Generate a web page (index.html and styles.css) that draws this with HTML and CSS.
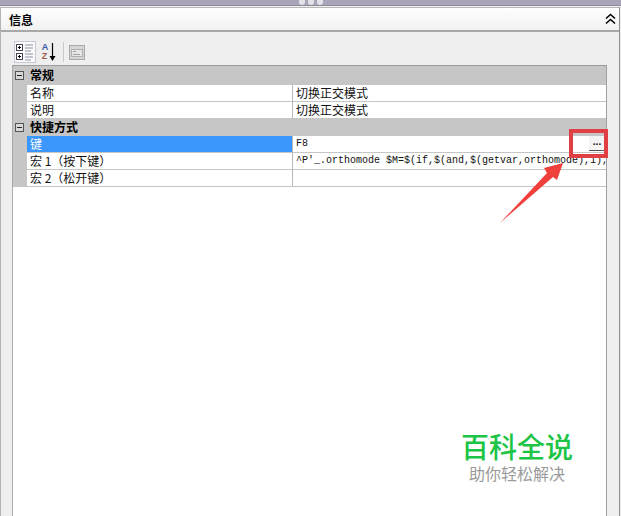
FILE: index.html
```html
<!DOCTYPE html>
<html lang="zh-CN">

<head>
   <meta charset="UTF-8">
   <title>信息</title>
   <link rel="stylesheet" href="styles.css">
</head>

<body>
   <div class="grip-bar">
      <span class="grip-dot"></span><span class="grip-dot"></span><span class="grip-dot"></span>
   </div>

   <div class="panel">
      <div class="panel-head">
         <span class="panel-title">信息</span>
         <svg class="collapse-icon" width="11" height="12" viewBox="0 0 11 12">
            <path d="M1 5.5 L5.5 1.5 L10 5.5 M1 10.5 L5.5 6.5 L10 10.5" fill="none" stroke="#000" stroke-width="1.6" />
         </svg>
      </div>

      <div class="panel-body">
         <div class="toolbar">
            <span class="tool-btn tool-active">
               <svg width="20" height="20" viewBox="0 0 20 20">
                  <rect x="1.5" y="2.5" width="6" height="6" fill="#fff" stroke="#445" />
                  <rect x="1.5" y="11.5" width="6" height="6" fill="#fff" stroke="#445" />
                  <path d="M3 5.5h3M4.500 4v3M3 14.500h3M4.500 13v3" stroke="#000" />
                  <path d="M10 3h8M10 6h8M10 9h6M10 12h8M10 15h8M10 18h6" stroke="#8a93a8" />
               </svg>
            </span>
            <span class="tool-btn tool-sort">
               <span class="sort-letters"><span class="letter-a">A</span><span class="letter-z">Z</span></span>
               <svg width="7" height="19" viewBox="0 0 7 19">
                  <path d="M3.500 0v15" stroke="#000" stroke-width="1.200" />
                  <path d="M0.500 13h6L3.500 18z" fill="#000" />
               </svg>
            </span>
            <span class="tool-sep"></span>
            <span class="tool-btn">
               <svg width="16" height="15" viewBox="0 0 16 15">
                  <rect x="0.500" y="0.500" width="15" height="14" fill="#d6d6d6" stroke="#a8a8a8" />
                  <rect x="2.500" y="4.500" width="11" height="7" fill="#e6e6e6" stroke="#b0b0b0" />
                  <path d="M4 6.500h3M4 9.500h7" stroke="#a0a0a0" />
               </svg>
            </span>
         </div>

         <div class="grid">
            <div class="cat-row">
               <span class="expander"></span>
               <span class="cat-name">常规</span>
            </div>
            <div class="row">
               <span class="cell-name">名称</span>
               <span class="cell-value">切换正交模式</span>
            </div>
            <div class="row">
               <span class="cell-name">说明</span>
               <span class="cell-value">切换正交模式</span>
            </div>
            <div class="cat-row">
               <span class="expander"></span>
               <span class="cat-name">快捷方式</span>
            </div>
            <div class="row">
               <span class="cell-name selected">键</span>
               <span class="cell-value mono">F8<span class="dots-btn">...</span></span>
            </div>
            <div class="row">
               <span class="cell-name">宏 1（按下键）</span>
               <span class="cell-value mono">^P'_.orthomode $M=$(if,$(and,$(getvar,orthomode),1),</span>
            </div>
            <div class="row">
               <span class="cell-name">宏 2（松开键）</span>
               <span class="cell-value mono"></span>
            </div>
         </div>
      </div>
   </div>

   <span class="red-box"></span>
   <svg class="red-arrow" width="70" height="66" viewBox="0 0 70 66">
      <path d="M65 3 L46 8 L49 13 L2 63 L55 17 L59 20 Z" fill="#f0403c" />
   </svg>

   <div class="watermark">
      <div class="wm-title">百科全说</div>
      <div class="wm-sub">助你轻松解决</div>
   </div>
</body>

</html>
```

FILE: styles.css
```css
html,
body {
   margin: 0;
   padding: 0;
}

body {
   position: relative;
   width: 621px;
   height: 516px;
   overflow: hidden;
   background: #efefef;
   font-family: "Noto Sans CJK SC", "Liberation Sans", sans-serif;
   color: #111;
}

.grip-bar {
   height: 5px;
   background: #a9a4b7;
   border-bottom: 1px solid #8f8b99;
   display: flex;
   justify-content: center;
   gap: 3px;
}

.grip-dot {
   width: 6px;
   height: 5px;
   border-radius: 0 0 3px 3px;
   background: #e4e2ea;
}

.panel {
   margin-right: 1px;
   border-left: 1px solid #b4b4b4;
   border-right: 1px solid #8e8e8e;
   height: 510px;
}

.panel-head {
   height: 22px;
   margin-top: 1px;
   display: flex;
   align-items: center;
   justify-content: space-between;
   padding: 0 3px 0 8px;
   background: linear-gradient(to bottom, #ffffff, #f1f1f1);
   border-top: 1px solid #b8b8b8;
   border-bottom: 2px solid #a8a8a8;
}

.panel-title {
   font-size: 12px;
   font-weight: bold;
   color: #000;
}

.collapse-icon {
   display: block;
}

.panel-body {
   height: 484px;
   display: flex;
   flex-direction: column;
   padding-left: 11px;
   padding-right: 12px;
}

.toolbar {
   height: 33px;
   flex: none;
   display: flex;
   align-items: center;
   gap: 2px;
   padding-top: 7px;
   box-sizing: border-box;
   padding-left: 2px;
}

.tool-btn {
   width: 22px;
   height: 22px;
   display: flex;
   align-items: center;
   justify-content: center;
}

.tool-active {
   background: #fafafa;
   border: 1px solid #c4c8d2;
   box-sizing: border-box;
}

.tool-sort {
   gap: 1px;
}

.sort-letters {
   display: flex;
   flex-direction: column;
   font: bold 9px/9px "Liberation Sans", sans-serif;
}

.letter-a {
   color: #3a5ca8;
}

.letter-z {
   color: #a05a4a;
}

.tool-sep {
   width: 1px;
   height: 20px;
   background: #c8c8c8;
   margin-left: 1px;
}

.grid {
   flex: 1;
   background: #fff;
   border-top: 1px solid #9c9c9c;
   border-left: 1px solid #a8a8a8;
   border-right: 1px solid #a0a0a0;
}

.cat-row {
   height: 17px;
   display: flex;
   align-items: center;
   background: #c6c6c6;
}

.cat-row:first-child {
   height: 19px;
}

.expander {
   position: relative;
   width: 9px;
   height: 9px;
   margin-left: 2px;
   border: 1px solid #555;
   box-sizing: border-box;
   background: #d8d8d8;
}

.expander::after {
   content: "";
   position: absolute;
   left: 1px;
   right: 1px;
   top: 3px;
   height: 1px;
   background: #222;
}

.cat-name {
   margin-left: 6px;
   margin-bottom: 2px;
   font-size: 12px;
   font-weight: bold;
   color: #000;
}

.row {
   height: 17px;
   display: flex;
   box-sizing: border-box;
   background: #fff;
   border-left: 14px solid #c6c6c6;
   font-size: 12px;
   line-height: 15px;
}

.cell-name {
   width: 266px;
   box-sizing: border-box;
   padding-left: 3px;
   flex: none;
   border-bottom: 1px solid #c6c6c6;
   border-right: 1px solid #b8b8b8;
   white-space: pre;
}

.selected {
   background: #3b97fb;
   color: #fff;
}

.cell-value {
   position: relative;
   flex: 1;
   min-width: 0;
   overflow: hidden;
   padding-left: 3px;
   border-bottom: 1px solid #c6c6c6;
   white-space: nowrap;
}

.mono {
   font-family: "Liberation Mono", "Noto Sans CJK SC", monospace;
   font-size: 10px;
   line-height: 16px;
}

.dots-btn {
   position: absolute;
   right: 1px;
   top: 0;
   width: 16px;
   height: 14px;
   line-height: 12px;
   text-align: center;
   border-bottom: 1px solid #555;
   background: #f4f4f4;
   color: #111;
   font-family: "Liberation Sans", sans-serif;
   font-weight: bold;
}

.red-box {
   position: absolute;
   left: 569px;
   top: 129px;
   width: 39px;
   height: 29px;
   box-sizing: border-box;
   border: 4px solid #e03f44;
}

.red-arrow {
   position: absolute;
   left: 498px;
   top: 160px;
}

.watermark {
   position: absolute;
   left: 447px;
   top: 431px;
   width: 140px;
   text-align: center;
}

.wm-title {
   font-size: 28px;
   line-height: 30px;
   font-weight: 500;
   color: #1cc545;
}

.wm-sub {
   font-size: 16px;
   line-height: 24px;
   color: #9a9a9a;
}
```
